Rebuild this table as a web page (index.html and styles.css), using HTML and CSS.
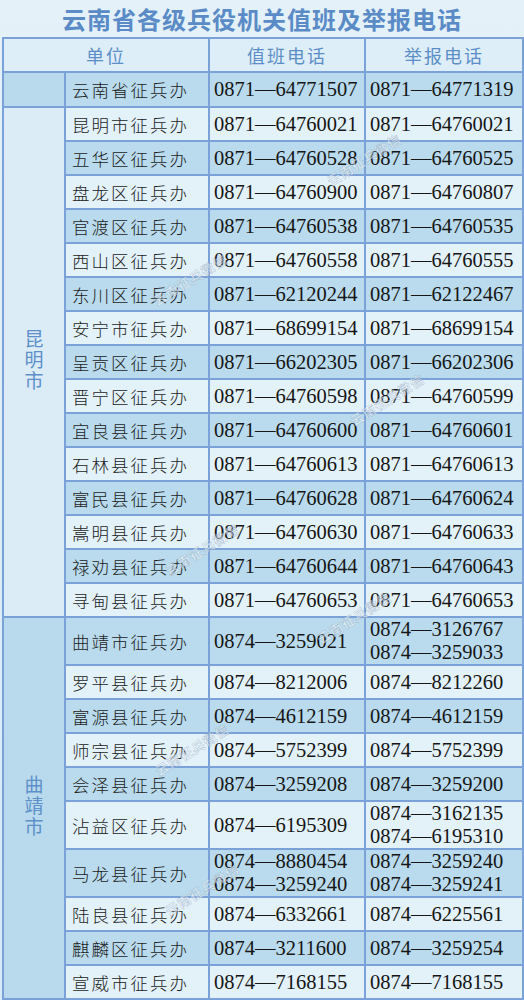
FILE: index.html
```html
<!DOCTYPE html>
<html lang="zh-CN">
<head>
<meta charset="utf-8">
<title>云南省各级兵役机关值班及举报电话</title>
<link rel="stylesheet" href="styles.css">
</head>
<body>
<div class="page">
  <h1 class="title">云南省各级兵役机关值班及举报电话</h1>
  <table class="grid">
    <colgroup>
      <col class="c-group"><col class="c-unit"><col class="c-duty"><col class="c-report">
    </colgroup>
    <tr class="head"><th colspan="2">单位</th><th>值班电话</th><th>举报电话</th></tr>
    <tr class="dark prov"><td class="group dark-bg"></td><td class="unit">云南省征兵办</td><td class="tel">0871—64771507</td><td class="tel">0871—64771319</td></tr>

    <tr class="light"><td class="group light-bg" rowspan="15"><span class="vert">昆明市</span></td><td class="unit">昆明市征兵办</td><td class="tel">0871—64760021</td><td class="tel">0871—64760021</td></tr>
    <tr class="dark"><td class="unit">五华区征兵办</td><td class="tel">0871—64760528</td><td class="tel">0871—64760525</td></tr>
    <tr class="light"><td class="unit">盘龙区征兵办</td><td class="tel">0871—64760900</td><td class="tel">0871—64760807</td></tr>
    <tr class="dark"><td class="unit">官渡区征兵办</td><td class="tel">0871—64760538</td><td class="tel">0871—64760535</td></tr>
    <tr class="light"><td class="unit">西山区征兵办</td><td class="tel">0871—64760558</td><td class="tel">0871—64760555</td></tr>
    <tr class="dark"><td class="unit">东川区征兵办</td><td class="tel">0871—62120244</td><td class="tel">0871—62122467</td></tr>
    <tr class="light"><td class="unit">安宁市征兵办</td><td class="tel">0871—68699154</td><td class="tel">0871—68699154</td></tr>
    <tr class="dark"><td class="unit">呈贡区征兵办</td><td class="tel">0871—66202305</td><td class="tel">0871—66202306</td></tr>
    <tr class="light"><td class="unit">晋宁区征兵办</td><td class="tel">0871—64760598</td><td class="tel">0871—64760599</td></tr>
    <tr class="dark"><td class="unit">宜良县征兵办</td><td class="tel">0871—64760600</td><td class="tel">0871—64760601</td></tr>
    <tr class="light"><td class="unit">石林县征兵办</td><td class="tel">0871—64760613</td><td class="tel">0871—64760613</td></tr>
    <tr class="dark"><td class="unit">富民县征兵办</td><td class="tel">0871—64760628</td><td class="tel">0871—64760624</td></tr>
    <tr class="light"><td class="unit">嵩明县征兵办</td><td class="tel">0871—64760630</td><td class="tel">0871—64760633</td></tr>
    <tr class="dark"><td class="unit">禄劝县征兵办</td><td class="tel">0871—64760644</td><td class="tel">0871—64760643</td></tr>
    <tr class="light"><td class="unit">寻甸县征兵办</td><td class="tel">0871—64760653</td><td class="tel">0871—64760653</td></tr>

    <tr class="dark double"><td class="group dark-bg" rowspan="10"><span class="vert">曲靖市</span></td><td class="unit">曲靖市征兵办</td><td class="tel">0874—3259021</td><td class="tel">0874—3126767<br>0874—3259033</td></tr>
    <tr class="light"><td class="unit">罗平县征兵办</td><td class="tel">0874—8212006</td><td class="tel">0874—8212260</td></tr>
    <tr class="dark"><td class="unit">富源县征兵办</td><td class="tel">0874—4612159</td><td class="tel">0874—4612159</td></tr>
    <tr class="light"><td class="unit">师宗县征兵办</td><td class="tel">0874—5752399</td><td class="tel">0874—5752399</td></tr>
    <tr class="dark"><td class="unit">会泽县征兵办</td><td class="tel">0874—3259208</td><td class="tel">0874—3259200</td></tr>
    <tr class="light double"><td class="unit">沾益区征兵办</td><td class="tel">0874—6195309</td><td class="tel">0874—3162135<br>0874—6195310</td></tr>
    <tr class="dark double"><td class="unit">马龙县征兵办</td><td class="tel">0874—8880454<br>0874—3259240</td><td class="tel">0874—3259240<br>0874—3259241</td></tr>
    <tr class="light"><td class="unit">陆良县征兵办</td><td class="tel">0874—6332661</td><td class="tel">0874—6225561</td></tr>
    <tr class="dark"><td class="unit">麒麟区征兵办</td><td class="tel">0874—3211600</td><td class="tel">0874—3259254</td></tr>
    <tr class="light last"><td class="unit">宣威市征兵办</td><td class="tel">0874—7168155</td><td class="tel">0874—7168155</td></tr>
  </table>

  <span class="mark m1">云南征兵微信</span>
  <span class="mark m2">云南征兵微信</span>
  <span class="mark m3">云南征兵微信</span>
  <span class="mark m4">云南征兵微信</span>
  <span class="mark m5">云南征兵微信</span>
  <span class="mark m6">云南征兵微信</span>
  <span class="mark m7">云南征兵微信</span>
</div>
</body>
</html>
```

FILE: styles.css
```css
html, body {
  margin: 0;
  padding: 0;
}
body {
  background: #dcecf6;
  width: 524px;
  height: 1000px;
  overflow: hidden;
}
.page {
  position: relative;
  width: 524px;
  height: 1000px;
  background: linear-gradient(#e4f1f9, #d7eaf5);
}
.title {
  margin: 0;
  height: 37px;
  line-height: 37px;
  text-align: center;
  font-family: "Noto Sans CJK SC", sans-serif;
  font-weight: 700;
  font-size: 24px;
  letter-spacing: 1px;
  color: #5a8bc6;
}
.grid {
  margin-left: 2px;
  width: 520px;
  table-layout: fixed;
  border-collapse: collapse;
  border: 2px solid #7aa2d8;
}
.c-group { width: 62px; }
.c-unit { width: 144px; }
.c-duty { width: 156px; }
.c-report { width: 158px; }

.grid th, .grid td {
  border: 2px solid #7aa2d8;
  padding: 0;
  vertical-align: middle;
}
.grid tr { height: 34px; }
.grid tr.head { height: 34px; }
.grid tr.prov { height: 35px; }
.grid tr.double { height: 48px; }

.head th {
  background: #deeef8;
  font-family: "Noto Sans CJK SC", sans-serif;
  font-weight: 400;
  font-size: 18px;
  letter-spacing: 2px;
  color: #5b8dc7;
  text-align: center;
}
.light td { background: #e3f1f9; }
.dark td { background: #b9dbed; }
.grid td.light-bg { background: #dbecf7; }
.grid td.dark-bg { background: #b8daec; }

.unit {
  padding-left: 6px !important;
  font-family: "Noto Sans CJK SC", sans-serif;
  font-weight: 300;
  font-size: 17.5px;
  letter-spacing: 2px;
  color: #1c1c1c;
  white-space: nowrap;
}
.tel {
  padding-left: 4px !important;
  font-family: "Liberation Serif", serif;
  font-size: 20.5px;
  line-height: 23px;
  color: #161616;
  white-space: nowrap;
}
.group {
  text-align: center;
}
.vert {
  display: inline-block;
  writing-mode: vertical-rl;
  font-family: "Noto Sans CJK SC", sans-serif;
  font-size: 19px;
  letter-spacing: 2px;
  color: #5d8fc9;
}
.mark {
  position: absolute;
  font-family: "Noto Sans CJK SC", sans-serif;
  font-size: 13px;
  font-weight: 700;
  letter-spacing: 1px;
  color: rgba(255, 255, 255, 0.55);
  -webkit-text-stroke: 0.6px rgba(120, 150, 180, 0.45);
  transform: rotate(-32deg);
  white-space: nowrap;
}
.m1 { left: 322px; top: 150px; }
.m2 { left: 148px; top: 270px; }
.m3 { left: 345px; top: 390px; }
.m4 { left: 160px; top: 540px; }
.m5 { left: 312px; top: 608px; }
.m6 { left: 150px; top: 740px; }
.m7 { left: 160px; top: 880px; }
```
